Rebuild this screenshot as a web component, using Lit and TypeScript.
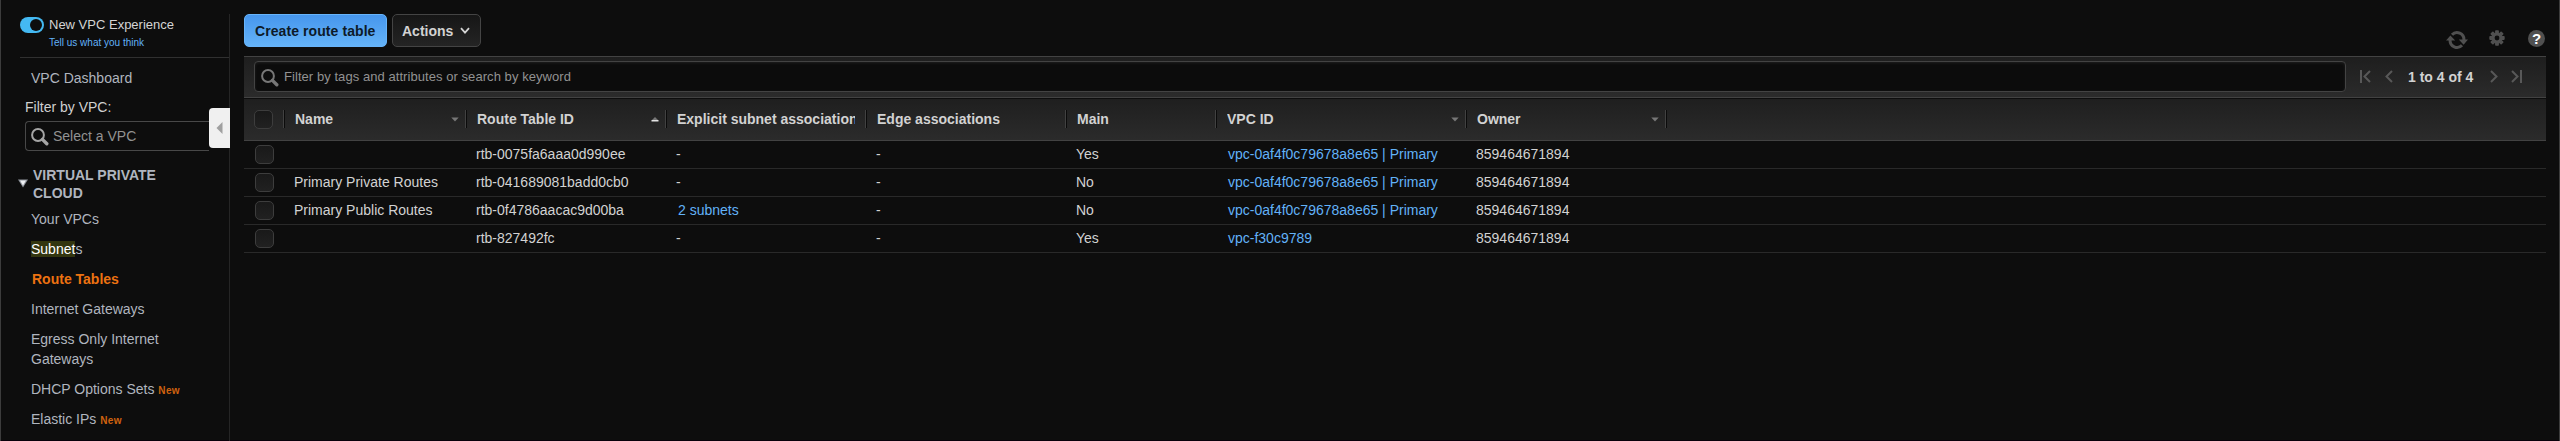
import { LitElement, html, css, svg, nothing } from "lit";
import { customElement } from "lit/decorators.js";

interface Column {
  label: string;
  sort?: "down" | "up";
}

interface RouteTable {
  name: string;
  id: string;
  subnets: string;
  edge: string;
  main: string;
  vpc: string;
  owner: string;
}

const columns: Column[] = [
  { label: "Name", sort: "down" },
  { label: "Route Table ID", sort: "up" },
  { label: "Explicit subnet associations" },
  { label: "Edge associations" },
  { label: "Main" },
  { label: "VPC ID", sort: "down" },
  { label: "Owner", sort: "down" },
];

const primaryVpc = "vpc-0af4f0c79678a8e65 | Primary";
const owner = "859464671894";

const routeTables: RouteTable[] = [
  { name: "", id: "rtb-0075fa6aaa0d990ee", subnets: "-", edge: "-", main: "Yes", vpc: primaryVpc, owner },
  { name: "Primary Private Routes", id: "rtb-041689081badd0cb0", subnets: "-", edge: "-", main: "No", vpc: primaryVpc, owner },
  { name: "Primary Public Routes", id: "rtb-0f4786aacac9d00ba", subnets: "2 subnets", edge: "-", main: "No", vpc: primaryVpc, owner },
  { name: "", id: "rtb-827492fc", subnets: "-", edge: "-", main: "Yes", vpc: "vpc-f30c9789", owner },
];

const searchIcon = (color: string) => html`<svg width="18" height="18" viewBox="0 0 18 18">
  <circle cx="7" cy="7" r="5.9" fill="none" stroke=${color} stroke-width="2" />
  <path d="M11.4 11.4L15.8 15.8" stroke=${color} stroke-width="3.4" stroke-linecap="round" />
</svg>`;

@customElement("vpc-sidebar")
export class VpcSidebar extends LitElement {
  static styles = css`
    :host {
      display: flex;
      flex-direction: column;
      position: relative;
      box-sizing: border-box;
      height: 427px;
      margin-top: 14px;
      border-right: 1px solid #252525;
      color: #b0b5bf;
      font-size: 14px;
      line-height: 20px;
    }
    .experience {
      display: flex;
      gap: 5px;
      height: 43px;
      margin-left: 19px;
      border-bottom: 1px solid #303030;
      box-sizing: content-box;
    }
    .switch {
      width: 14px;
      height: 12px;
      margin-top: 3px;
      padding: 2px 0 2px 10px;
      border-radius: 8px;
      background: #44b9f2;
    }
    .knob {
      width: 12px;
      height: 12px;
      border-radius: 50%;
      background: #0d0d0d;
    }
    .labels {
      padding-top: 1px;
      font-size: 13px;
      line-height: 20px;
      color: #d4d4d4;
      white-space: nowrap;
    }
    .labels .feedback {
      padding-top: 1px;
      font-size: 10px;
      line-height: 14px;
      color: #62b2f8;
    }
    .dashboard {
      margin: 10px 0 0 30px;
    }
    .filter {
      margin: 9px 0 0 24px;
      color: #d0d0d0;
    }
    .select {
      display: flex;
      align-items: center;
      gap: 4px;
      box-sizing: border-box;
      width: 184px;
      height: 30px;
      margin: 4px 0 0 24px;
      padding-left: 5px;
      border: 1px solid #484848;
      border-right: 0;
      border-radius: 4px 0 0 4px;
      color: #929292;
    }
    .select svg {
      margin-top: 1px;
    }
    .collapse {
      position: absolute;
      right: -1px;
      top: 94px;
      display: flex;
      align-items: center;
      justify-content: center;
      width: 21px;
      height: 40px;
      border-radius: 4px 0 0 4px;
      background: #f0f0f0;
    }
    .section {
      display: flex;
      gap: 5px;
      margin: 15px 0 0 17px;
      font-weight: bold;
      line-height: 18px;
    }
    .section svg {
      margin-top: 13px;
    }
    .links {
      display: flex;
      flex-direction: column;
      gap: 10px;
      width: 140px;
      margin: 7px 0 0 30px;
    }
    .found {
      color: #fff;
      background: #33360f;
    }
    .current {
      padding-left: 1px;
      color: #ec7211;
      font-weight: bold;
    }
    .new {
      color: #d0620f;
      font-size: 10px;
      font-weight: bold;
      letter-spacing: 0.3px;
    }
    .tagged {
      line-height: 20px;
      height: 20px;
      white-space: nowrap;
    }
  `;

  render() {
    return html`
      <div class="experience">
        <div class="switch"><div class="knob"></div></div>
        <div class="labels">
          <div>New VPC Experience</div>
          <div class="feedback">Tell us what you think</div>
        </div>
      </div>
      <div class="dashboard">VPC Dashboard</div>
      <div class="filter">Filter by VPC:</div>
      <div class="select">${searchIcon("#a5a5a5")}<span>Select a VPC</span></div>
      <div class="collapse">
        <svg width="7" height="12" viewBox="0 0 7 12"><path d="M6.5 0V12L0.5 6Z" fill="#a0a0a0" /></svg>
      </div>
      <div class="section">
        <svg width="10" height="9" viewBox="0 0 10 9">
          <path d="M0 .5H10L5 8.5Z" fill="#8f949c" /><path d="M2 1.5H8L5 6.5Z" fill="#eef0f3" />
        </svg>
        <div>VIRTUAL PRIVATE<br />CLOUD</div>
      </div>
      <div class="links">
        <div>Your VPCs</div>
        <div><span class="found">Subnet</span>s</div>
        <div class="current">Route Tables</div>
        <div>Internet Gateways</div>
        <div>Egress Only Internet Gateways</div>
        <div class="tagged">DHCP Options Sets <span class="new">New</span></div>
        <div class="tagged">Elastic IPs <span class="new">New</span></div>
      </div>
    `;
  }
}

@customElement("route-table-grid")
export class RouteTableGrid extends LitElement {
  static styles = css`
    :host {
      display: block;
      font-size: 14px;
      color: #d2d2d2;
    }
    .row {
      display: grid;
      grid-template-columns: 41px 182px 200px 200px 200px 150px 250px 200px 1fr;
      box-sizing: border-box;
      height: 28px;
      border-bottom: 1px solid #292929;
      line-height: 26px;
      white-space: nowrap;
    }
    .header {
      height: 42px;
      background: linear-gradient(#1f1f1f, #2b2b2b);
      border-bottom-color: #424242;
      line-height: 41px;
      font-weight: bold;
    }
    .cell {
      padding-left: 9px;
    }
    .checkcell {
      padding: 4px 0 0 11px;
      line-height: 0;
    }
    .header .checkcell {
      padding: 11px 0 0 10px;
    }
    .check {
      box-sizing: border-box;
      width: 19px;
      height: 19px;
      border: 1px solid #3d3d3d;
      border-radius: 5px;
      background: linear-gradient(#191919, #212121);
    }
    .header .cell {
      display: flex;
      align-items: center;
      justify-content: space-between;
      padding: 0 8px 0 10px;
      overflow: hidden;
    }
    .header .plain {
      padding-right: 12px;
    }
    .label {
      overflow: hidden;
    }
    .divided {
      background: linear-gradient(to right, #414141 50%, #0b0b0b 50%) right 11px / 2px 18px no-repeat;
    }
    .link {
      color: #62b2f8;
      padding-left: 2px;
    }
  `;

  private arrow(direction: "down" | "up") {
    return direction === "down"
      ? html`<svg width="8" height="5" viewBox="0 0 8 5"><path d="M.3 .5H7.7L4 4.5Z" fill="#777" /></svg>`
      : html`<svg width="8" height="5" viewBox="0 0 8 5"><path d="M1 3L4 0L7 3Z" fill="#777" /><path d="M.5 3H7.5V4.5H.5Z" fill="#e4e4e4" /></svg>`;
  }

  render() {
    return html`
      <div class="row header">
        <div class="checkcell divided"><div class="check"></div></div>
        ${columns.map(
          (c) => html`<div class="cell divided ${c.sort ? "" : "plain"}">
            <span class="label">${c.label}</span>${c.sort ? this.arrow(c.sort) : nothing}
          </div>`,
        )}
      </div>
      ${routeTables.map(
        (r) => html`<div class="row">
          <div class="checkcell"><div class="check"></div></div>
          <div class="cell">${r.name}</div>
          <div class="cell">${r.id}</div>
          <div class="cell">${r.subnets === "-" ? "-" : html`<span class="link">${r.subnets}</span>`}</div>
          <div class="cell">${r.edge}</div>
          <div class="cell">${r.main}</div>
          <div class="cell"><span class="link">${r.vpc}</span></div>
          <div class="cell">${r.owner}</div>
        </div>`,
      )}
    `;
  }
}

@customElement("app-root")
export class AppRoot extends LitElement {
  static styles = css`
    :host {
      display: flex;
      box-sizing: border-box;
      width: 100%;
      height: 441px;
      overflow: hidden;
      border: solid #3c3c3c;
      border-width: 0 1px;
      background: #0d0d0d;
      box-shadow: inset 0 -1px #08000a;
      font-family: "Liberation Sans", Arial, sans-serif;
    }
    vpc-sidebar {
      flex: none;
      width: 229px;
    }
    .content {
      flex: 1;
      margin: 14px 13px 0 14px;
      min-width: 0;
    }
    .toolbar {
      display: flex;
      height: 42px;
      gap: 5px;
    }
    .button {
      display: flex;
      box-sizing: border-box;
      height: 33px;
      border: 1px solid #444;
      border-radius: 5px;
      background: linear-gradient(#161616, #242424);
      color: #d2d2d2;
      font-size: 14px;
      font-weight: bold;
      line-height: 32px;
      padding: 0 10px 0 9px;
      width: 89px;
      justify-content: space-between;
      align-items: center;
      white-space: nowrap;
    }
    .primary {
      width: 143px;
      border-color: #67b4fa;
      background: linear-gradient(#4696ed, #64b3f8);
      color: #0d1a28;
      letter-spacing: 0.08px;
      padding-left: 10px;
    }
    .tools {
      display: flex;
      align-items: flex-start;
      margin-left: auto;
      padding: 16px 1px 0 0;
    }
    .refresh {
      margin: 1px 21px 0 0;
    }
    .gear {
      margin: 0 23px 0 0;
    }
    .help {
      width: 17px;
      height: 17px;
      border-radius: 50%;
      background: #505050;
      color: #fff;
      font-size: 15px;
      font-weight: bold;
      line-height: 18px;
      text-align: center;
    }
    .filterbar {
      display: flex;
      box-sizing: border-box;
      height: 42px;
      margin-bottom: 1px;
      padding: 4px 0 0 10px;
      border: solid #424242;
      border-width: 1px 0;
      background: linear-gradient(#1e1e1e, #2b2b2b);
    }
    .search {
      display: flex;
      align-items: center;
      gap: 5px;
      flex: 1;
      box-sizing: border-box;
      height: 31px;
      padding-left: 6px;
      border: 1px solid #434343;
      border-radius: 4px;
      background: #0c0c0c;
      box-shadow: inset 0 1px 3px #202020;
      color: #929292;
      font-size: 13px;
      letter-spacing: 0.06px;
    }
    .search svg {
      margin-top: 2px;
    }
    .pager {
      display: flex;
      align-items: center;
      width: 186px;
      height: 31px;
      margin-left: 14px;
      color: #d2d2d2;
      font-size: 14px;
      font-weight: bold;
      white-space: nowrap;
    }
    .first {
      margin-right: 14px;
    }
    .count {
      margin: 1px 0 0 15px;
      width: 82px;
    }
    .last {
      margin-left: 13px;
    }
  `;

  private gear() {
    return html`<svg class="gear" width="16" height="16" viewBox="-8 -8 16 16">
      <g fill="#505050">
        ${[0, 45, 90, 135].map((a) => svg`<rect x="-1.9" y="-7.7" width="3.8" height="15.4" rx=".8" transform="rotate(${a})" />`)}
      </g>
      <circle r="5.6" fill="#505050" />
      <circle r="2.4" fill="#0d0d0d" />
    </svg>`;
  }

  private refresh() {
    return html`<svg class="refresh" width="22" height="18" viewBox="0 0 22 18">
      <g fill="none" stroke="#505050" stroke-width="3">
        <path d="M6 3.8A6.9 6.9 0 0 1 17.9 9" />
        <path d="M16 14.2A6.9 6.9 0 0 1 4.1 9" />
      </g>
      <path d="M12.8 8.6H22L17.6 13.8ZM0 9.6H9.2L4.4 4.4Z" fill="#505050" />
    </svg>`;
  }

  render() {
    return html`
      <vpc-sidebar></vpc-sidebar>
      <div class="content">
        <div class="toolbar">
          <div class="button primary">Create route table</div>
          <div class="button">
            Actions
            <svg width="10" height="8" viewBox="0 0 10 8"><path d="M1 1.2L5 5.6L9 1.2" fill="none" stroke="#d4d4d4" stroke-width="1.8" /></svg>
          </div>
          <div class="tools">
            ${this.refresh()} ${this.gear()}
            <div class="help">?</div>
          </div>
        </div>
        <div class="filterbar">
          <div class="search">${searchIcon("#777")}<span>Filter by tags and attributes or search by keyword</span></div>
          <div class="pager">
            <svg class="first" width="11" height="14" viewBox="0 0 11 14"><path d="M1 0V13M10 1L4.5 6.5L10 12" fill="none" stroke="#585858" stroke-width="2" /></svg>
            <svg width="8" height="14" viewBox="0 0 8 14"><path d="M7 1L1.5 6.5L7 12" fill="none" stroke="#585858" stroke-width="2" /></svg>
            <span class="count">1 to 4 of 4</span>
            <svg width="8" height="14" viewBox="0 0 8 14"><path d="M1 1L6.5 6.5L1 12" fill="none" stroke="#585858" stroke-width="2" /></svg>
            <svg class="last" width="11" height="14" viewBox="0 0 11 14"><path d="M10 0V13M1 1L6.5 6.5L1 12" fill="none" stroke="#585858" stroke-width="2" /></svg>
          </div>
        </div>
        <route-table-grid></route-table-grid>
      </div>
    `;
  }
}
